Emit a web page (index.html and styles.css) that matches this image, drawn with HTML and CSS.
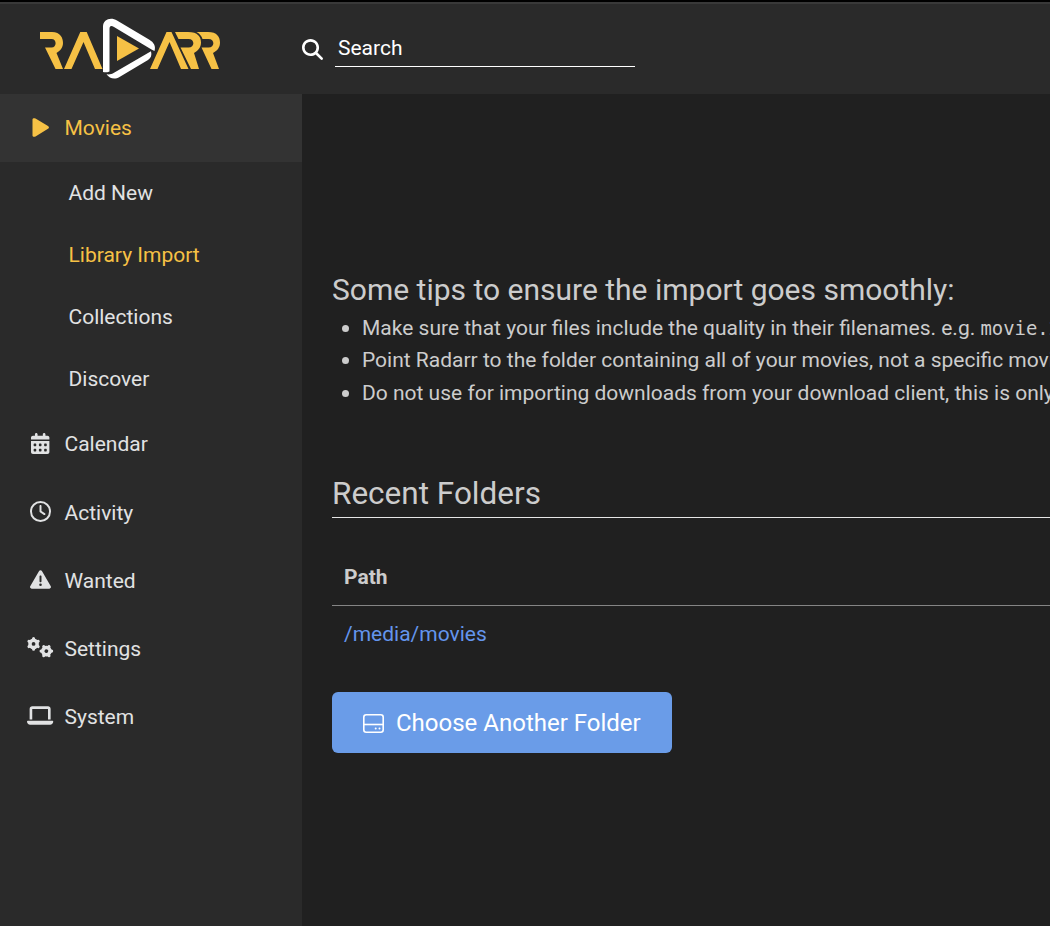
FILE: index.html
```html
<!DOCTYPE html>
<html lang="en">
<head>
<meta charset="utf-8">
<title>Radarr</title>
<link rel="stylesheet" href="styles.css">
</head>
<body>
<header class="header">
  <svg class="logo" viewBox="0 0 200 86" aria-label="Radarr">
    <g fill="#f6c145">
      <path d="M10 32H22C30.500 32 33 38 33 43C33 47.500 30.500 50.500 26.500 53L33 69H25.500L15 47.500H21.500C27 47.500 27 39 21.500 39H10Z"/>
      <path d="M34 69L50.300 32H56.700L72.500 69H65L53.500 42L41.500 69Z"/>
      <path d="M120 69L136.500 32H141.500L158.500 69H151L139.500 42L127.500 69Z"/>
      <path d="M145 32H158C168 32 171 37 171 42.500C171 47 168.500 50.500 164 53L169 69H161L150.500 47.500H158.500C165 47.500 165 39 158.500 39H148.500Z"/>
      <path d="M166.500 32H178C187 32 190 37 190 42.500C190 47.500 187.500 50.500 183 53L189 69H181.500L171.500 47.500H178.500C185 47.500 185 39 178.500 39H172.500C171.500 36 169.500 33.500 166.500 32Z"/>
      <path d="M87 36V61L109 48.500Z"/>
    </g>
    <g fill="#fff">
      <path d="M73 72V27C73 19 81 17 87 20.500L119 39.500C124 42.500 126 46 124.500 51L121.500 49.500L84 27C81 25 79.500 26 79.500 29V71.500C77 72.500 75 72.500 73 72Z"/>
      <path d="M76.500 74.300C79.500 74.800 82 74 84 72.800L121 51.300C122 55.500 121 58 118 60L89.500 77C84.500 80 79.500 78.500 76.500 74.300Z"/>
    </g>
  </svg>
  <label class="search">
    <svg class="search-icon" viewBox="0 0 512 512"><path fill="#fff" d="M416 208c0 45.900-14.900 88.300-40 122.700L502.600 457.400c12.500 12.500 12.500 32.800 0 45.300s-32.800 12.500-45.300 0L330.700 376c-34.400 25.200-76.800 40-122.700 40C93.100 416 0 322.900 0 208S93.100 0 208 0S416 93.100 416 208zM208 352a144 144 0 1 0 0-288 144 144 0 1 0 0 288z"/></svg>
    <input class="search-input" type="text" placeholder="Search">
  </label>
</header>
<div class="body">
  <nav class="sidebar">
    <a class="item active"><span class="icon"><svg class="square" viewBox="0 0 21 21"><path d="M2.500 2.500C2.500 1.300 4.200.8 5.500 1.600L18 9C19.300 9.800 19.300 11 18 11.800L5.500 19.400C4.200 20.200 2.500 19.700 2.500 18.500Z"/></svg></span>Movies</a>
    <a class="child">Add New</a>
    <a class="child selected">Library Import</a>
    <a class="child">Collections</a>
    <a class="child">Discover</a>
    <a class="item tall"><span class="icon"><svg class="calendar" viewBox="0 0 448 512"><path fill-rule="evenodd" d="M128 0c17.700 0 32 14.300 32 32V64H288V32c0-17.700 14.300-32 32-32s32 14.300 32 32V64h48c26.500 0 48 21.500 48 48v48H0V112C0 85.500 21.500 64 48 64H96V32c0-17.700 14.300-32 32-32zM0 192H448V464c0 26.500-21.500 48-48 48H48c-26.500 0-48-21.500-48-48V192zm64 80v32c0 8.800 7.200 16 16 16h32c8.800 0 16-7.200 16-16V272c0-8.800-7.200-16-16-16H80c-8.800 0-16 7.200-16 16zm128 0v32c0 8.800 7.200 16 16 16h32c8.800 0 16-7.200 16-16V272c0-8.800-7.200-16-16-16H208c-8.800 0-16 7.200-16 16zm144-16c-8.800 0-16 7.200-16 16v32c0 8.800 7.200 16 16 16h32c8.800 0 16-7.200 16-16V272c0-8.800-7.200-16-16-16H336zM64 400v32c0 8.800 7.200 16 16 16h32c8.800 0 16-7.200 16-16V400c0-8.800-7.200-16-16-16H80c-8.800 0-16 7.200-16 16zm144-16c-8.800 0-16 7.200-16 16v32c0 8.800 7.200 16 16 16h32c8.800 0 16-7.200 16-16V400c0-8.800-7.200-16-16-16H208zm112 16v32c0 8.800 7.200 16 16 16h32c8.800 0 16-7.200 16-16V400c0-8.800-7.200-16-16-16H336c-8.800 0-16 7.200-16 16z"/></svg></span>Calendar</a>
    <a class="item"><span class="icon"><svg class="square" viewBox="0 0 512 512"><path d="M464 256A208 208 0 1 1 48 256a208 208 0 1 1 416 0zM0 256a256 256 0 1 0 512 0A256 256 0 1 0 0 256zM232 120V256c0 8 4 15.500 10.700 20l96 64c11 7.400 25.900 4.400 33.300-6.700s4.400-25.900-6.700-33.300L280 243.200V120c0-13.300-10.700-24-24-24s-24 10.700-24 24z"/></svg></span>Activity</a>
    <a class="item"><span class="icon"><svg class="square" viewBox="0 0 512 512"><path d="M256 32c14.200 0 27.300 7.500 34.500 19.800l216 368c7.300 12.400 7.300 27.700 .2 40.100S486.300 480 472 480H40c-14.300 0-27.600-7.700-34.700-20.100s-7-27.800 .2-40.100l216-368C228.700 39.500 241.800 32 256 32zm0 128c-13.300 0-24 10.700-24 24V296c0 13.300 10.700 24 24 24s24-10.700 24-24V184c0-13.300-10.700-24-24-24zm32 224a32 32 0 1 0 -64 0 32 32 0 1 0 64 0z"/></svg></span>Wanted</a>
    <a class="item"><span class="icon"><svg class="wide" viewBox="0 0 640 512"><defs><g id="gear"><circle r="88" fill="none" stroke="currentColor" stroke-width="84"/><g stroke="currentColor" stroke-width="74" stroke-linecap="round"><path d="M0-110V-130M0 110V130"/><path transform="rotate(60)" d="M0-110V-130M0 110V130"/><path transform="rotate(120)" d="M0-110V-130M0 110V130"/></g></g></defs><use href="#gear" transform="translate(160 168)"/><use href="#gear" transform="translate(472 344) rotate(30)"/></svg></span>Settings</a>
    <a class="item"><span class="icon"><svg class="wide" viewBox="0 0 640 512"><path d="M128 32C92.700 32 64 60.700 64 96V352h64V96H512V352h64V96c0-35.300-28.700-64-64-64H128zM19.200 384C8.600 384 0 392.600 0 403.200C0 445.600 34.400 480 76.800 480H563.200c42.400 0 76.800-34.400 76.800-76.800c0-10.600-8.600-19.200-19.200-19.200H19.200z"/></svg></span>System</a>
  </nav>
  <main class="content">
    <h2 class="tips-title">Some tips to ensure the import goes smoothly:</h2>
    <ul class="tips">
      <li>Make sure that your files include the quality in their filenames. e.g. <code>movie.2008.bluray.mkv</code></li>
      <li>Point Radarr to the folder containing all of your movies, not a specific movie.</li>
      <li>Do not use for importing downloads from your download client, this is only for existing organized libraries.</li>
    </ul>
    <h2 class="legend">Recent Folders</h2>
    <div class="table">
      <div class="table-head">Path</div>
      <div class="table-row"><a>/media/movies</a></div>
    </div>
    <button class="button" type="button">
      <svg class="drive" viewBox="0 0 21 21"><g fill="none" stroke="#fff" stroke-width="1.600"><rect x=".8" y="1.800" width="19.400" height="17.400" rx="2.400"/><path d="M1 11.500H20"/></g><g fill="#fff"><circle cx="12.700" cy="15.500" r="1"/><circle cx="16.500" cy="15.500" r="1"/></g></svg>
      Choose Another Folder
    </button>
  </main>
</div>
</body>
</html>
```
FILE: styles.css
```css
* { box-sizing: border-box; }
body {
  margin: 0;
  height: 926px;
  overflow: hidden;
  display: flex;
  flex-direction: column;
  background: #202020;
  color: #ccc;
  font: 21px/32.4px Roboto, sans-serif;
}
.header {
  flex: 0 0 94px;
  display: flex;
  align-items: flex-start;
  background: #2a2a2a;
  border-top: 2px solid #000;
  box-shadow: inset 0 2px #393939;
}
.logo { width: 200px; height: 86px; margin: -2px 0 0 30px; }
.search { display: flex; align-items: center; margin: 26px 0 0 72px; }
.search-icon { width: 21px; height: 21px; margin: 3px 12px 0 0; }
.search-input {
  width: 300px;
  height: 39px;
  padding: 2px 3px 0;
  border: 0;
  border-bottom: 1px solid #fff;
  outline: 0;
  background: transparent;
  color: #fff;
  font: inherit;
}
.search-input::placeholder { color: #fff; opacity: 1; }
.body { flex: 1; display: flex; min-height: 0; }
.sidebar {
  flex: 0 0 302px;
  background: #2a2a2a;
  color: #e1e2e3;
}
.item { display: flex; align-items: center; height: 68px; padding-left: 26.5px; }
.tall { height: 69px; }
.active { background: #333; }
.active, .selected { color: #f6c145; }
.child { display: flex; align-items: center; height: 62px; padding-left: 68.5px; }
.icon { display: flex; justify-content: center; width: 27px; margin: 0 11px 3px 0; }
.active .icon, .tall .icon { margin-bottom: 2px; }
.icon svg { display: block; height: 21px; fill: currentColor; overflow: visible; }
.square { width: 21px; }
.calendar { width: 18.4px; }
.wide { width: 26.25px; }
.content { flex: 1; min-width: 0; padding: 176px 0 0 30px; white-space: nowrap; overflow: hidden; }
.tips-title { margin: 0 0 2px; font-weight: 400; font-size: 30px; line-height: 40px; }
.tips { margin: 0; padding-left: 30px; list-style: none; }
.tips li::before {
  content: "";
  display: inline-block;
  width: 7px;
  height: 7px;
  margin: 0 13px 0 -20px;
  border-radius: 50%;
  background: #ccc;
  vertical-align: 3px;
}
.tips code { font: 18.9px/1 "DejaVu Sans Mono", monospace; }
.legend {
  margin: 61px 0 30px;
  height: 48px;
  border-bottom: 1px solid #e5e5e5;
  font-weight: 400;
  font-size: 31.5px;
  line-height: 47px;
}
.table-head {
  height: 58px;
  padding: 13px 12px;
  border-bottom: 1px solid #858585;
  font-weight: 700;
}
.table-row { height: 57px; padding: 12px; color: #5d9cec; }
.table-row { color: #6495ed; }
.button {
  display: flex;
  align-items: center;
  width: 340px;
  height: 61px;
  margin-top: 29px;
  padding: 0 31px;
  border: 0;
  border-radius: 6px;
  background: #6a9ce8;
  color: #fff;
  font: 24px/32px Roboto, sans-serif;
}
.drive { width: 21px; height: 21px; margin: 2px 12px 0 0; }
```
